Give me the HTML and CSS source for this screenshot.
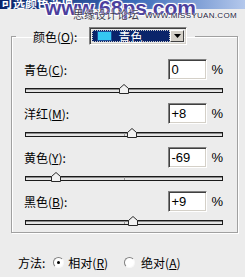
FILE: index.html
```html
<!DOCTYPE html>
<html lang="zh">
 <head>
  <meta charset="UTF-8">
  <title>可选颜色选项</title>
  <link rel="stylesheet" href="styles.css">
 </head>
<body>

<div class="fenster">

 <div class="titelleiste">
  <span class="titel">可选颜色选项</span>
 </div>

 <!-- Wasserzeichen ueber der Titelleiste -->
 <div class="wz">
  <span class="wz-gross">www.68ps.com</span>
  <span class="wz-cn">思缘设计论坛</span>
  <span class="wz-klein">WWW.MISSYUAN.COM</span>
 </div>

 <form class="dialog">
  <fieldset class="gruppe">
   <legend class="kopf">
    <span class="lbl">颜色(<u>O</u>):</span>
    <span class="combo">
     <span class="combo-wert"><span class="farbe"></span>青色</span>
     <span class="combo-knopf"><svg width="7" height="4" viewBox="0 0 7 4"><path d="M0 0H7L3.5 4Z" fill="#000"/></svg></span>
    </span>
   </legend>

   <div class="kanal">
    <div class="zeile">
     <span class="lbl">青色(<u>C</u>):</span>
     <input type="text" class="zahl" value="0" readonly>
     <span class="pct">%</span>
    </div>
    <div class="spur"><span class="mitte"></span><svg class="regler" style="left:93px" width="10" height="10" viewBox="0 0 10 10"><path d="M0.5 9.5V4.5L5 0.5L9.5 4.5V9.5Z" fill="#f2f2f2" stroke="#2a2a2a"/></svg></div>
   </div>

   <div class="kanal">
    <div class="zeile">
     <span class="lbl">洋红(<u>M</u>):</span>
     <input type="text" class="zahl" value="+8" readonly>
     <span class="pct">%</span>
    </div>
    <div class="spur"><span class="mitte"></span><svg class="regler" style="left:101px" width="10" height="10" viewBox="0 0 10 10"><path d="M0.5 9.5V4.5L5 0.5L9.5 4.5V9.5Z" fill="#f2f2f2" stroke="#2a2a2a"/></svg></div>
   </div>

   <div class="kanal">
    <div class="zeile">
     <span class="lbl">黄色(<u>Y</u>):</span>
     <input type="text" class="zahl" value="-69" readonly>
     <span class="pct">%</span>
    </div>
    <div class="spur"><span class="mitte"></span><svg class="regler" style="left:25px" width="10" height="10" viewBox="0 0 10 10"><path d="M0.5 9.5V4.5L5 0.5L9.5 4.5V9.5Z" fill="#f2f2f2" stroke="#2a2a2a"/></svg></div>
   </div>

   <div class="kanal">
    <div class="zeile">
     <span class="lbl">黑色(<u>B</u>):</span>
     <input type="text" class="zahl" value="+9" readonly>
     <span class="pct">%</span>
    </div>
    <div class="spur"><span class="mitte"></span><svg class="regler" style="left:102px" width="10" height="10" viewBox="0 0 10 10"><path d="M0.5 9.5V4.5L5 0.5L9.5 4.5V9.5Z" fill="#f2f2f2" stroke="#2a2a2a"/></svg></div>
   </div>
  </fieldset>

  <div class="methode">
   <span class="lbl">方法:</span>
   <span class="radio an"></span><span class="rtext">相对(<u>R</u>)</span>
   <span class="radio"></span><span class="rtext">绝对(<u>A</u>)</span>
  </div>
 </form>

</div>

</body>
</html>
```

FILE: styles.css
```css
body {
 margin: 0;
 background: #ececec;
 font-family: "Noto Sans CJK SC", "Noto Sans", sans-serif;
 font-size: 12px;
 color: #000;
 overflow: hidden;
}

.fenster {
 position: relative;
 width: 245px;
 height: 277px;
}

/* Titelleiste */
.titelleiste {
 height: 9px;
 overflow: hidden;
 background: linear-gradient(to right, #0a246a, #3a6ab8 55%, #b4c8ec);
}

.titel {
 display: block;
 margin-top: -4px;
 padding-left: 1px;
 line-height: 14px;
 font-weight: bold;
 color: #fff;
}

/* Wasserzeichen */
.wz {
 position: absolute;
 left: 0;
 top: 0;
 width: 245px;
 height: 24px;
 pointer-events: none;
}

.wz-gross {
 position: absolute;
 left: 45px;
 top: -2px;
 line-height: 20px;
 font-family: "Liberation Sans", sans-serif;
 font-weight: bold;
 font-size: 21px;
 color: #4c3f9e;
 text-shadow: 1px 1px 0 #fff, -1px -1px 0 #fff, 1px -1px 0 #fff, -1px 1px 0 #fff, 0 0 3px #fff;
}

.wz-cn {
 position: absolute;
 left: 73px;
 top: 7px;
 line-height: 14px;
 font-size: 11px;
 color: #3c3c50;
 text-shadow: 0 0 2px #fff, 0 0 1px #fff;
}

.wz-klein {
 position: absolute;
 left: 145px;
 top: 11px;
 line-height: 10px;
 font-family: "Liberation Sans", sans-serif;
 font-size: 8px;
 letter-spacing: 0.3px;
 color: #1c1c3c;
 text-shadow: 0 0 2px #fff, 0 0 1px #fff;
}

/* Gruppe */
.gruppe {
 margin: 18px 0 0 11px;
 width: 227px;
 box-sizing: border-box;
 padding: 14px 14px 7px 4px;
 border: 1px solid #a0a0a0;
 box-shadow: inset 1px 1px 0 #fff, 1px 1px 0 #fff;
 min-inline-size: 0;
}

.kopf {
 display: flex;
 align-items: center;
 padding: 0 8px 0 17px;
 height: 18px;
}

.combo {
 display: flex;
 margin-left: 12px;
 width: 98px;
 height: 18px;
 box-sizing: border-box;
 border: 1px solid;
 border-color: #808080 #fff #fff #808080;
 box-shadow: inset 1px 1px 0 #404040, inset -1px -1px 0 #d4d0c8;
 padding: 2px;
}

.combo-wert {
 flex: 1;
 display: flex;
 align-items: center;
 background: #0a246a;
 color: #fff;
 outline: 1px dotted #c8c8c8;
 outline-offset: -1px;
 padding-left: 5px;
 gap: 6px;
}

.farbe {
 width: 15px;
 height: 10px;
 background: #35c8f2;
 border: 1px solid #1a4f9a;
 box-sizing: border-box;
}

.combo-knopf {
 width: 14px;
 display: flex;
 align-items: center;
 justify-content: center;
 background: #d4d0c8;
 border: 1px solid;
 border-color: #fff #404040 #404040 #fff;
 box-sizing: border-box;
}

/* Kanaele */
.kanal {
 padding-left: 8px;
 margin-bottom: 10px;
}

.kanal:last-child {
 margin-bottom: 0;
}

.zeile {
 display: flex;
 align-items: center;
 height: 21px;
}

.zahl {
 margin-left: auto;
 width: 39px;
 height: 21px;
 box-sizing: border-box;
 border: 1px solid;
 border-color: #808080 #fff #fff #808080;
 box-shadow: inset 1px 1px 0 #404040, inset -1px -1px 0 #d4d0c8;
 background: #fff;
 padding: 0 0 0 2px;
 font-family: "Liberation Sans", sans-serif;
 font-size: 13px;
 color: #000;
 outline: 0;
}

.pct {
 margin-left: 4px;
 font-family: "Liberation Sans", sans-serif;
 font-size: 13px;
}

.spur {
 position: relative;
 margin: 8px 0 0 1px;
 height: 5px;
 box-sizing: border-box;
 border: 1px solid #1a1a1a;
 background: #e4e4e4;
 box-shadow: inset 0 1px 0 #8a8a8a;
}

.mitte {
 position: absolute;
 left: 98px;
 top: 0;
 width: 1px;
 height: 3px;
 background: #9a9a9a;
}

.regler {
 position: absolute;
 top: -5px;
}

/* Methode */
.methode {
 display: flex;
 align-items: center;
 margin-top: 22px;
 padding-left: 18px;
 height: 14px;
}

.radio {
 width: 11px;
 height: 11px;
 box-sizing: border-box;
 border-radius: 50%;
 border: 1px solid;
 border-color: #808080 #f8f8f8 #f8f8f8 #808080;
 background: #fff;
 margin-left: 8px;
 display: flex;
 align-items: center;
 justify-content: center;
}

.radio.an::after {
 content: "";
 width: 3px;
 height: 3px;
 border-radius: 50%;
 background: #000;
}

.radio + .rtext {
 margin-left: 4px;
}

.rtext + .radio {
 margin-left: 16px;
}

.rtext:last-child {
 margin-left: 6px;
}
```
